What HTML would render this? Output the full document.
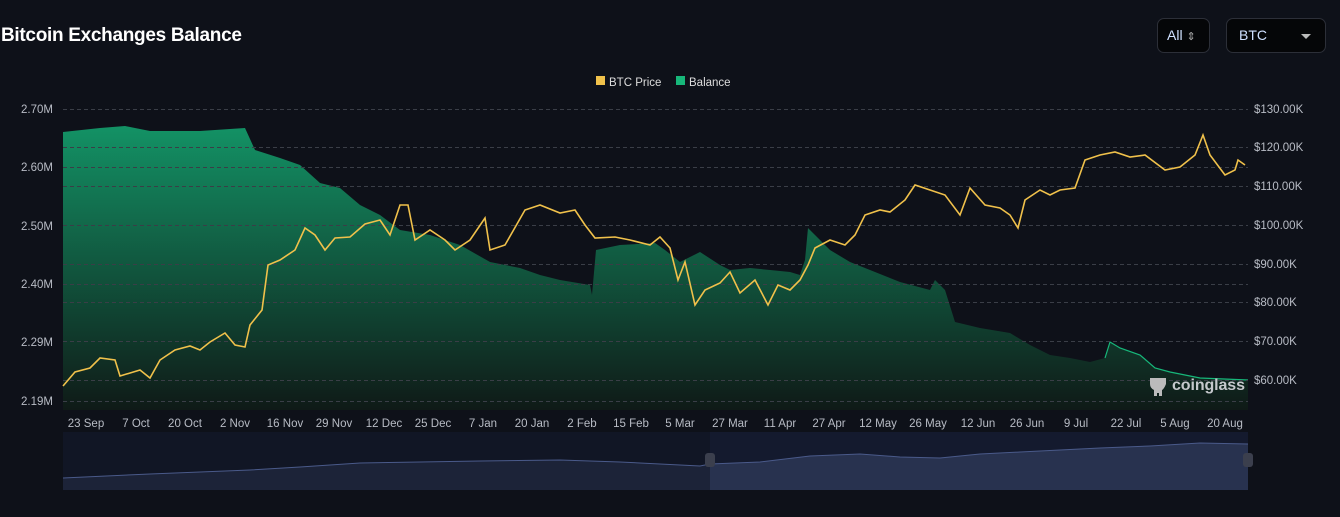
<!DOCTYPE html>
<html><head><style>
body{margin:0;background:#0e1119;width:1340px;height:517px;overflow:hidden;font-family:"Liberation Sans",sans-serif;}
.t{position:absolute;left:1px;top:25px;color:#fff;font-weight:bold;font-size:19px;letter-spacing:-0.3px}
.b{position:absolute;top:18px;height:35px;border:1px solid #2c2f38;border-radius:7px;background:#050608;color:#cfe0ff;font-size:14px;box-sizing:border-box;line-height:33px}
</style></head><body>
<div class="t">Bitcoin Exchanges Balance</div>
<div class="b" style="left:1157px;width:53px;padding-left:9px">All <span style="font-size:11px;color:#aaa">⇕</span></div>
<div class="b" style="left:1226px;width:100px;padding-left:12px">BTC<span style="position:absolute;right:14px;top:15px;border:5px solid transparent;border-top:5px solid #bbb;border-bottom:0"></span></div>
<svg width="1340" height="517" style="position:absolute;left:0;top:0" font-family="Liberation Sans" font-size="11.5" fill="#b8bcc5">
<defs><linearGradient id="g" x1="0" y1="0" x2="0" y2="1"><stop offset="0" stop-color="#139265"/><stop offset="1" stop-color="#0f1a17"/></linearGradient></defs>
<rect x="596" y="76" width="9" height="9" fill="#f0c14b"/><text x="609" y="86" fill="#ddd">BTC Price</text>
<rect x="676" y="76" width="9" height="9" fill="#17b77a"/><text x="689" y="86" fill="#ddd">Balance</text>
<polygon fill="url(#g)" points="63,410 63,132 100,128 125,126 150,131 200,131 245,128 255,150 280,158 300,165 320,183 340,188 360,205 380,215 400,230 430,235 460,245 490,262 520,268 540,275 560,280 590,285 592,295 596,250 620,245 655,243 665,250 680,262 700,252 720,265 730,270 750,268 770,270 790,272 800,275 805,260 808,228 815,235 830,250 850,262 870,270 900,282 930,290 935,280 945,290 955,322 980,328 1010,333 1030,345 1050,355 1070,358 1090,362 1105,358 1110,342 1120,348 1140,355 1155,368 1170,372 1200,378 1248,380 1248,410"/>
<polyline fill="none" stroke="#17b77a" stroke-width="1.2" points="1105,358 1110,342 1120,348 1140,355 1155,368 1170,372 1200,378 1248,380"/>
<g stroke="#3a3e47" stroke-dasharray="4,3">
<line x1="63" x2="1248" y1="109.5" y2="109.5"/><line x1="63" x2="1248" y1="147.5" y2="147.5"/><line x1="63" x2="1248" y1="167.5" y2="167.5"/><line x1="63" x2="1248" y1="186.5" y2="186.5"/><line x1="63" x2="1248" y1="225.5" y2="225.5"/><line x1="63" x2="1248" y1="264.5" y2="264.5"/><line x1="63" x2="1248" y1="284.5" y2="284.5"/><line x1="63" x2="1248" y1="302.5" y2="302.5"/><line x1="63" x2="1248" y1="341.5" y2="341.5"/><line x1="63" x2="1248" y1="380.5" y2="380.5"/><line x1="63" x2="1248" y1="401.5" y2="401.5"/>
</g>
<polyline fill="none" stroke="#f0c14b" stroke-width="1.6" points="63,386 75,372 90,368 100,358 115,360 120,376 140,370 150,378 160,360 175,350 190,346 200,350 210,342 225,333 235,345 245,347 250,325 262,310 268,265 280,260 295,250 305,228 315,235 325,250 335,238 350,237 365,224 380,220 390,235 400,205 408,205 415,240 430,230 445,240 455,250 470,240 485,218 490,250 505,245 525,210 540,205 560,213 575,210 585,225 595,238 615,237 630,240 650,245 660,237 670,248 678,280 685,262 695,305 705,290 720,283 730,272 740,293 755,280 768,305 778,285 790,290 800,280 808,265 815,248 830,240 845,245 855,235 865,215 880,210 890,212 905,200 915,185 930,190 945,195 960,215 970,188 985,205 1000,208 1010,215 1018,228 1025,200 1040,190 1050,195 1060,190 1075,188 1085,160 1100,155 1115,152 1130,157 1145,155 1165,170 1180,167 1195,155 1203,135 1210,155 1225,175 1235,170 1238,160 1245,165"/>
<g text-anchor="end"><text x="53" y="113">2.70M</text><text x="53" y="171">2.60M</text><text x="53" y="230">2.50M</text><text x="53" y="288">2.40M</text><text x="53" y="346">2.29M</text><text x="53" y="405">2.19M</text></g>
<g><text x="1254" y="113">$130.00K</text><text x="1254" y="151">$120.00K</text><text x="1254" y="190">$110.00K</text><text x="1254" y="229">$100.00K</text><text x="1254" y="268">$90.00K</text><text x="1254" y="306">$80.00K</text><text x="1254" y="345">$70.00K</text><text x="1254" y="384">$60.00K</text></g>
<text x="1172" y="390" font-size="16" font-weight="bold" fill="#c5c8cc" textLength="73">coinglass</text>
<path d="M1150,378 h16 v6 q-2,5 -4,6 v6 h-3 v-3 h-2 v3 h-3 v-6 q-4,-2 -4,-6z" fill="#bbb"/>
<g text-anchor="middle"><text x="86" y="427">23 Sep</text><text x="136" y="427">7 Oct</text><text x="185" y="427">20 Oct</text><text x="235" y="427">2 Nov</text><text x="285" y="427">16 Nov</text><text x="334" y="427">29 Nov</text><text x="384" y="427">12 Dec</text><text x="433" y="427">25 Dec</text><text x="483" y="427">7 Jan</text><text x="532" y="427">20 Jan</text><text x="582" y="427">2 Feb</text><text x="631" y="427">15 Feb</text><text x="680" y="427">5 Mar</text><text x="730" y="427">27 Mar</text><text x="780" y="427">11 Apr</text><text x="829" y="427">27 Apr</text><text x="878" y="427">12 May</text><text x="928" y="427">26 May</text><text x="978" y="427">12 Jun</text><text x="1027" y="427">26 Jun</text><text x="1076" y="427">9 Jul</text><text x="1126" y="427">22 Jul</text><text x="1175" y="427">5 Aug</text><text x="1225" y="427">20 Aug</text></g>
<rect x="63" y="432" width="647" height="58" fill="#111625"/>
<rect x="710" y="432" width="538" height="58" fill="#141a2e"/>
<polygon fill="#1c2338" points="63,490 63,478 150,474 250,470 300,467 360,463 420,462 480,461 560,460 620,462 700,466 710,464 710,490"/>
<polygon fill="#28324f" points="710,490 710,464 760,462 810,456 860,454 900,457 940,458 980,454 1020,452 1060,450 1100,448 1150,446 1200,443 1248,444 1248,490"/>
<polyline fill="none" stroke="#4a5a8a" points="63,478 150,474 250,470 300,467 360,463 420,462 480,461 560,460 620,462 700,466 710,464 760,462 810,456 860,454 900,457 940,458 980,454 1020,452 1060,450 1100,448 1150,446 1200,443 1248,444"/>
<rect x="705" y="453" width="10" height="14" rx="3" fill="#3b3f4d"/><rect x="1243" y="453" width="10" height="14" rx="3" fill="#3b3f4d"/>
</svg>
</body></html>
